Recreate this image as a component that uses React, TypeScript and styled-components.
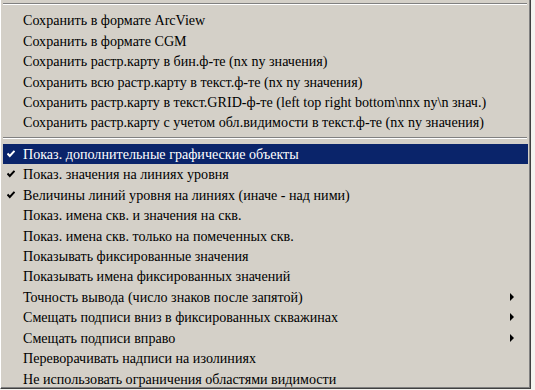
import React, { FC } from 'react';
import styled, { createGlobalStyle } from 'styled-components';

const GlobalStyle = createGlobalStyle`
  html, body {
    margin: 0;
    padding: 0;
    background: #f4f4f0;
  }
  body {
    width: 535px;
    height: 390px;
    overflow: hidden;
  }
`;

const Menu = styled.div`
  width: 531px;
  height: 389px;
  box-sizing: border-box;
  background: #d4d0c8;
  border-left: 1px solid #ffffff;
  border-right: 1px solid #404040;
  border-bottom: 1px solid #404040;
  box-shadow: inset -1px -1px 0 #808080, inset 1px 0 0 #d4d0c8;
  padding: 0 2px 0 2px;
  display: flex;
  flex-direction: column;
  font-family: 'Liberation Serif', 'Times New Roman', serif;
  font-size: 14.1px;
  color: #000;
  overflow: hidden;
`;

const Separator = styled.div<{ $top: number; $bottom: number }>`
  margin: ${(p) => p.$top}px 1px ${(p) => p.$bottom}px 0;
  height: 1px;
  background: #808080;
  border-bottom: 1px solid #ffffff;
  flex: none;
`;

const Row = styled.div<{ $active?: boolean }>`
  height: 20.45px;
  flex: none;
  display: grid;
  grid-template-columns: 20px 1fr 20px;
  align-items: center;
  background: ${(p) => (p.$active ? '#0a246a' : 'transparent')};
  color: ${(p) => (p.$active ? '#ffffff' : '#000000')};
  white-space: nowrap;
`;

const CheckCell = styled.span`
  display: flex;
  align-items: center;
  justify-content: flex-start;
  height: 100%;
  padding-left: 4px;
`;

const Label = styled.span`
  line-height: 20px;
`;

const ArrowCell = styled.span`
  display: flex;
  align-items: center;
  justify-content: flex-start;
  padding-left: 2px;
`;

const Check: FC<{ color: string }> = ({ color }) => (
  <svg width="8" height="8" viewBox="0 0 8 8">
    <path d="M0.5 3.5 L2.8 6 L7.5 0.8" fill="none" stroke={color} strokeWidth="2" />
  </svg>
);

const Arrow: FC = () => (
  <svg width="4" height="8" viewBox="0 0 4 8">
    <path d="M0 0 L4 4 L0 8 Z" fill="#000" />
  </svg>
);

type Item = { label: string; checked?: boolean; active?: boolean; sub?: boolean };

const saveItems: Item[] = [
  { label: 'Сохранить в формате ArcView' },
  { label: 'Сохранить в формате CGM' },
  { label: 'Сохранить растр.карту в бин.ф-те (nx ny значения)' },
  { label: 'Сохранить всю растр.карту в текст.ф-те (nx ny значения)' },
  { label: 'Сохранить растр.карту в текст.GRID-ф-те (left top right bottom\\nnx ny\\n знач.)' },
  { label: 'Сохранить растр.карту с учетом обл.видимости в текст.ф-те (nx ny значения)' },
];

const showItems: Item[] = [
  { label: 'Показ. дополнительные графические объекты', checked: true, active: true },
  { label: 'Показ. значения на линиях уровня', checked: true },
  { label: 'Величины линий уровня на линиях (иначе - над ними)', checked: true },
  { label: 'Показ. имена скв. и значения на скв.' },
  { label: 'Показ. имена скв. только на помеченных скв.' },
  { label: 'Показывать фиксированные значения' },
  { label: 'Показывать имена фиксированных значений' },
  { label: 'Точность вывода (число знаков после запятой)', sub: true },
  { label: 'Смещать подписи вниз в фиксированных скважинах', sub: true },
  { label: 'Смещать подписи вправо', sub: true },
  { label: 'Переворачивать надписи на изолиниях' },
  { label: 'Не использовать ограничения областями видимости' },
];

const MenuRow: FC<{ item: Item }> = ({ item }) => (
  <Row $active={item.active}>
    <CheckCell>{item.checked && <Check color={item.active ? '#fff' : '#000'} />}</CheckCell>
    <Label>{item.label}</Label>
    <ArrowCell>{item.sub && <Arrow />}</ArrowCell>
  </Row>
);

export default function App() {
  return (
    <>
      <GlobalStyle />
      <Menu>
        <Separator $top={3} $bottom={5} />
        {saveItems.map((it) => (
          <MenuRow key={it.label} item={it} />
        ))}
        <Separator $top={4} $bottom={5} />
        {showItems.map((it) => (
          <MenuRow key={it.label} item={it} />
        ))}
      </Menu>
    </>
  );
}
